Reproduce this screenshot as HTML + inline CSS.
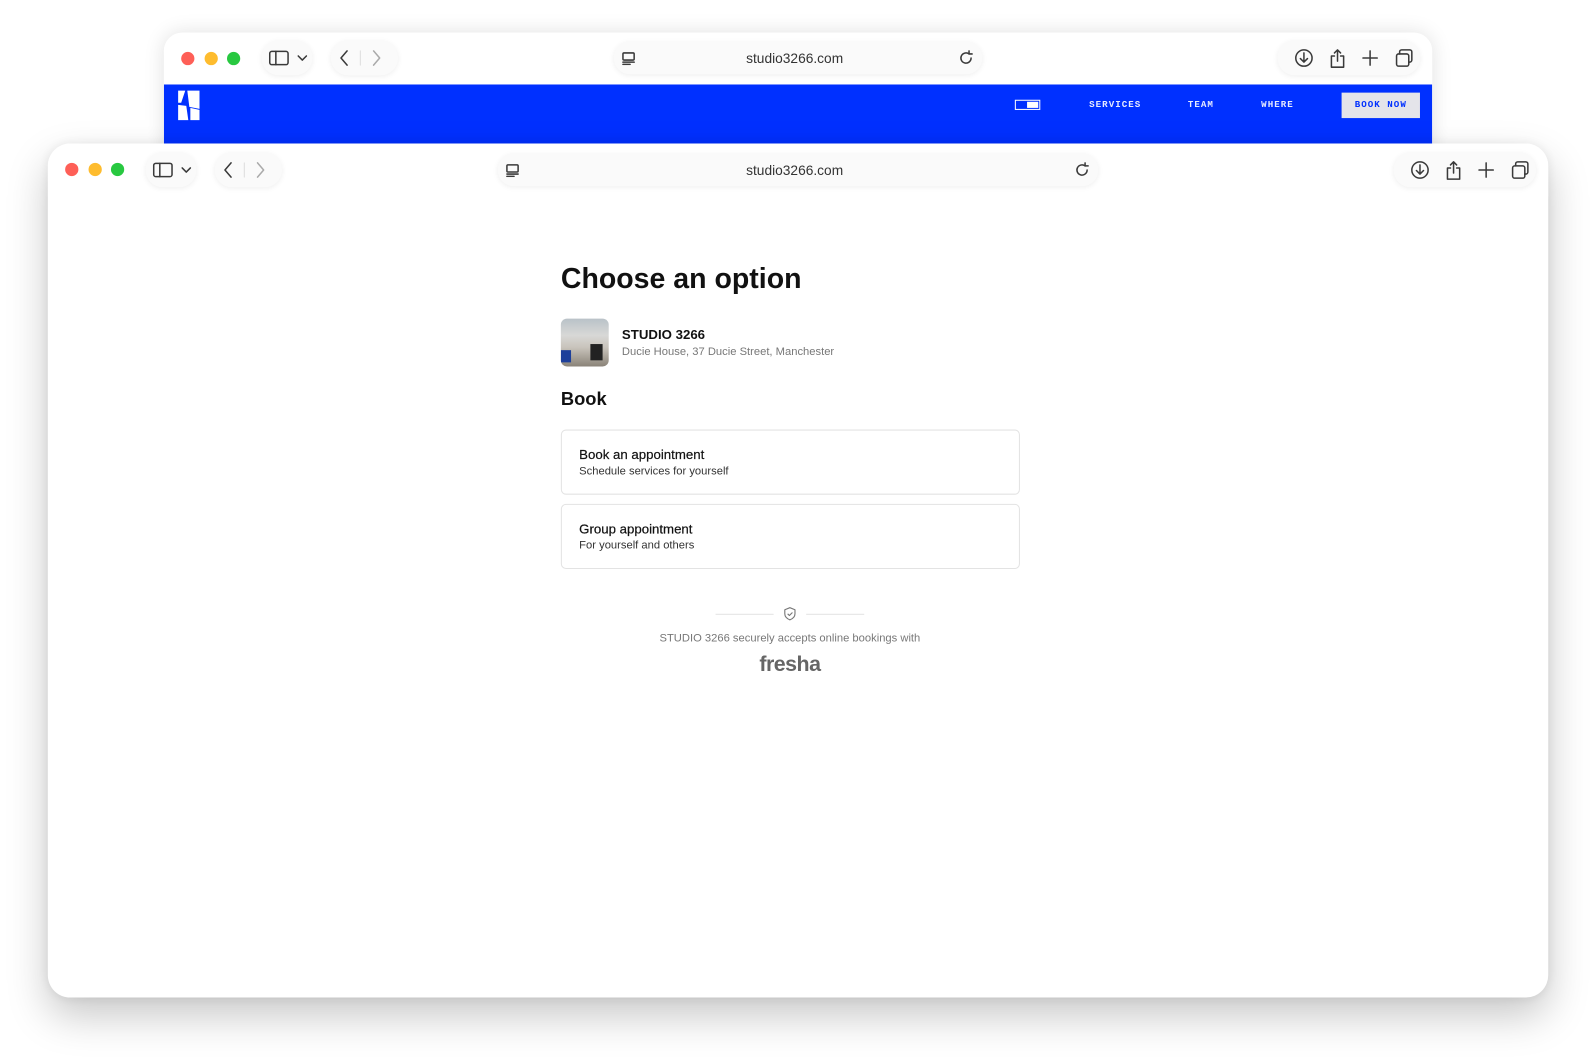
<!DOCTYPE html>
<html><head><meta charset="utf-8"><style>
html,body{margin:0;padding:0;background:#fff;width:1596px;height:1062px;overflow:hidden}
#s{position:absolute;left:0;top:0;width:1568px;height:1043px;transform:scale(1.0179);transform-origin:0 0;font-family:"Liberation Sans",sans-serif}
.win{position:absolute;background:#fff;overflow:hidden}
.tb{position:absolute;left:0;right:0;top:0;height:52px;background:#fff}
.dot{position:absolute;top:19px;width:13px;height:13px;border-radius:50%}
.pill{position:absolute;height:34px;border-radius:17px;background:#fafafa;box-shadow:0 1px 6px rgba(0,0,0,.07)}
.url{position:absolute;font-size:13.5px;color:#333}
svg{position:absolute}
.ic{stroke:#3a3a3a;stroke-width:1.5;fill:none;stroke-linecap:round;stroke-linejoin:round}
</style></head><body><div id="s">

<!-- back window -->
<div class="win" style="left:161px;top:32px;width:1246px;height:140px;border-radius:18px 18px 0 0;box-shadow:0 0 20px rgba(0,0,0,.12)">
 <div class="tb" style="height:51px">
  <div class="dot" style="left:17px;background:#fe5f57"></div>
  <div class="dot" style="left:40px;background:#febc2e"></div>
  <div class="dot" style="left:62px;background:#28c840"></div>
  <div class="pill" style="left:96px;top:8px;width:50px"></div>
  <svg style="left:103px;top:17px" width="40" height="16" class="ic"><rect x="1" y="1.5" width="18" height="13" rx="2"/><line x1="7" y1="1.5" x2="7" y2="14.5"/><path d="M29 6l4 4 4-4"/></svg>
  <div class="pill" style="left:164px;top:8px;width:66px"></div>
  <svg style="left:170px;top:16px" width="55" height="18" class="ic"><path d="M10 2l-6 7 6 7"/><line x1="23" y1="2" x2="23" y2="16" stroke="#ddd" stroke-width="1"/><path d="M36 2l6 7-6 7" stroke="#aaa"/></svg>
  <div class="pill" style="left:442px;top:9px;width:362px;height:32px;border-radius:16px"></div>
  <svg style="left:450px;top:19px" width="14" height="13" class="ic" stroke-width="1.2" stroke="#777"><rect x="1" y="1" width="11" height="7" rx="1"/><line x1="1" y1="10" x2="12" y2="10"/><line x1="1" y1="12.3" x2="8" y2="12.3"/></svg>
  <div class="url" style="left:572px;top:18px">studio3266.com</div>
  <svg style="left:780px;top:17px" width="16" height="16" class="ic" stroke-width="1.3" stroke="#666"><path d="M13 8a5 5 0 1 1-2-4"/><path d="M11 1v3h3"/></svg>
  <div class="pill" style="left:1094px;top:8px;width:140px"></div>
  <svg style="left:1110px;top:15px" width="120" height="22" class="ic"><circle cx="10" cy="10" r="8"/><path d="M10 5v9M6.5 10.5l3.5 3.5 3.5-3.5"/><path d="M40 8h-3v11h12V8h-3M43 13V2M40 5l3-3 3 3"/><path d="M75 3v14M68 10h14"/><rect x="101" y="6" width="12" height="12" rx="2"/><path d="M104 6V4a2 2 0 0 1 2-2h8a2 2 0 0 1 2 2v8a2 2 0 0 1-2 2h-1"/></svg>
 </div>
 <div style="position:absolute;left:0;right:0;top:51px;height:59px;background:#0030ff">
  <svg style="left:13px;top:4px" width="24" height="32"><path d="M1 2h7l-4 12H1z M10 2h12v18l-10-2z M1 16l8 1 2 14H1z M13 19l9 2v10h-9z" fill="#fff"/></svg>
  <div style="position:absolute;left:836px;top:15px;width:23px;height:8px;border:1px solid #fff"><div style="position:absolute;right:1px;top:1px;width:11px;height:6px;background:#fff"></div></div>
  <div style="position:absolute;left:909px;top:15px;font:bold 9px 'Liberation Mono',monospace;color:#fff;letter-spacing:1px;opacity:.9">SERVICES</div>
  <div style="position:absolute;left:1006px;top:15px;font:bold 9px 'Liberation Mono',monospace;color:#fff;letter-spacing:1px;opacity:.9">TEAM</div>
  <div style="position:absolute;left:1078px;top:15px;font:bold 9px 'Liberation Mono',monospace;color:#fff;letter-spacing:1px;opacity:.9">WHERE</div>
  <div style="position:absolute;left:1157px;top:8px;width:77px;height:25px;background:#e4e4ea;font:bold 9px 'Liberation Mono',monospace;color:#0030ff;letter-spacing:1px;line-height:25px;text-align:center">BOOK NOW</div>
 </div>
</div>

<!-- front window -->
<div class="win" style="left:47px;top:141px;width:1474px;height:839px;border-radius:22px;box-shadow:0 18px 40px rgba(0,0,0,.22),0 0 12px rgba(0,0,0,.08)">
 <div class="tb">
  <div class="dot" style="left:17px;background:#fe5f57"></div>
  <div class="dot" style="left:40px;background:#febc2e"></div>
  <div class="dot" style="left:62px;background:#28c840"></div>
  <div class="pill" style="left:96px;top:9px;width:50px"></div>
  <svg style="left:103px;top:18px" width="40" height="16" class="ic"><rect x="1" y="1.5" width="18" height="13" rx="2"/><line x1="7" y1="1.5" x2="7" y2="14.5"/><path d="M29 6l4 4 4-4"/></svg>
  <div class="pill" style="left:164px;top:9px;width:66px"></div>
  <svg style="left:170px;top:17px" width="55" height="18" class="ic"><path d="M10 2l-6 7 6 7"/><line x1="23" y1="2" x2="23" y2="16" stroke="#ddd" stroke-width="1"/><path d="M36 2l6 7-6 7" stroke="#aaa"/></svg>
  <div class="pill" style="left:442px;top:10px;width:590px;height:32px;border-radius:16px"></div>
  <svg style="left:450px;top:20px" width="14" height="13" class="ic" stroke-width="1.2" stroke="#777"><rect x="1" y="1" width="11" height="7" rx="1"/><line x1="1" y1="10" x2="12" y2="10"/><line x1="1" y1="12.3" x2="8" y2="12.3"/></svg>
  <div class="url" style="left:686px;top:19px">studio3266.com</div>
  <svg style="left:1008px;top:18px" width="16" height="16" class="ic" stroke-width="1.3" stroke="#666"><path d="M13 8a5 5 0 1 1-2-4"/><path d="M11 1v3h3"/></svg>
  <div class="pill" style="left:1322px;top:9px;width:140px"></div>
  <svg style="left:1338px;top:16px" width="120" height="22" class="ic"><circle cx="10" cy="10" r="8"/><path d="M10 5v9M6.5 10.5l3.5 3.5 3.5-3.5"/><path d="M40 8h-3v11h12V8h-3M43 13V2M40 5l3-3 3 3"/><path d="M75 3v14M68 10h14"/><rect x="101" y="6" width="12" height="12" rx="2"/><path d="M104 6V4a2 2 0 0 1 2-2h8a2 2 0 0 1 2 2v8a2 2 0 0 1-2 2h-1"/></svg>
 </div>
 <div style="position:absolute;left:504px;top:117px;font-size:28px;font-weight:bold;color:#111">Choose an option</div>
 <div style="position:absolute;left:504px;top:172px;width:47px;height:47px;border-radius:6px;background:linear-gradient(180deg,#b9c2c8 0%,#d8d8d6 35%,#c9c4bc 60%,#8a8378 100%);overflow:hidden">
  <div style="position:absolute;left:0;bottom:4px;width:10px;height:12px;background:#1d3f9a"></div>
  <div style="position:absolute;right:6px;bottom:6px;width:12px;height:16px;background:#222"></div>
 </div>
 <div style="position:absolute;left:564px;top:180px;font-size:13px;font-weight:bold;color:#111">STUDIO 3266</div>
 <div style="position:absolute;left:564px;top:199px;font-size:11px;color:#777">Ducie House, 37 Ducie Street, Manchester</div>
 <div style="position:absolute;left:504px;top:241px;font-size:18px;font-weight:bold;color:#111">Book</div>
 <div style="position:absolute;left:504px;top:281px;width:449px;height:62px;border:1px solid #e3e3e3;border-radius:5px">
  <div style="position:absolute;left:17px;top:16px;font-size:13px;color:#111;-webkit-text-stroke:.2px #111">Book an appointment</div>
  <div style="position:absolute;left:17px;top:34px;font-size:11px;color:#333">Schedule services for yourself</div>
 </div>
 <div style="position:absolute;left:504px;top:354px;width:449px;height:62px;border:1px solid #e3e3e3;border-radius:5px">
  <div style="position:absolute;left:17px;top:16px;font-size:13px;color:#111;-webkit-text-stroke:.2px #111">Group appointment</div>
  <div style="position:absolute;left:17px;top:34px;font-size:11px;color:#333">For yourself and others</div>
 </div>
 <div style="position:absolute;left:656px;top:462px;width:57px;height:1px;background:#e2e2e2"></div>
 <div style="position:absolute;left:745px;top:462px;width:57px;height:1px;background:#e2e2e2"></div>
 <svg style="left:723px;top:455px" width="12" height="14" fill="none" stroke="#777" stroke-width="1.1" stroke-linejoin="round"><path d="M6 1l5 2v4c0 3-2.5 5-5 6-2.5-1-5-3-5-6V3z"/><path d="M3.8 7l1.7 1.7 3-3"/></svg>
 <div style="position:absolute;left:0;width:1458px;top:480px;text-align:center;font-size:11px;color:#777">STUDIO 3266 securely accepts online bookings with</div>
 <div style="position:absolute;left:0;width:1458px;top:500px;text-align:center;font-size:21px;font-weight:bold;color:#666;letter-spacing:-.5px">fresha</div>
</div>
</div></body></html>
